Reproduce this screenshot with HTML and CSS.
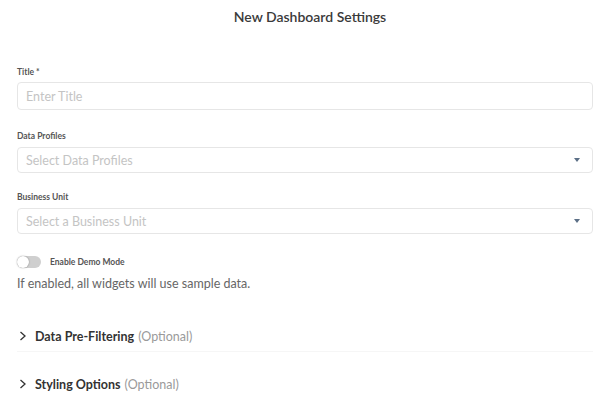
FILE: index.html
```html
<!DOCTYPE html>
<html lang="en">
<head>
  <meta charset="UTF-8" />
  <title>New Dashboard Settings</title>
  <link rel="stylesheet" href="styles.css">
</head>
<body>
  <div class="modal">
    <div class="modal-header">New Dashboard Settings</div>

    <form class="settings-form">
      <div class="field">
        <label for="title">Title *</label>
        <input type="text" id="title" class="text-input" placeholder="Enter Title" />
      </div>

      <div class="field">
        <label>Data Profiles</label>
        <div class="select-box">
          <span class="placeholder">Select Data Profiles</span>
          <span class="caret"></span>
        </div>
      </div>

      <div class="field">
        <label>Business Unit</label>
        <div class="select-box">
          <span class="placeholder">Select a Business Unit</span>
          <span class="caret"></span>
        </div>
      </div>

      <div class="toggle-row">
        <span class="switch"><span class="knob"></span></span>
        <span class="toggle-label">Enable Demo Mode</span>
      </div>
      <p class="help">If enabled, all widgets will use sample data.</p>

      <div class="section first">
        <svg class="chevron" width="8" height="10" viewBox="0 0 8 10"><path d="M1.5 1 L6 5 L1.5 9" fill="none" stroke="#333" stroke-width="1.3"/></svg>
        <span class="section-title">Data Pre-Filtering</span>
        <span class="optional">(Optional)</span>
      </div>
      <div class="section">
        <svg class="chevron" width="8" height="10" viewBox="0 0 8 10"><path d="M1.5 1 L6 5 L1.5 9" fill="none" stroke="#333" stroke-width="1.3"/></svg>
        <span class="section-title">Styling Options</span>
        <span class="optional">(Optional)</span>
      </div>
    </form>
  </div>
</body>
</html>
```

FILE: styles.css
```css
body {
  margin: 0;
  font-family: Lato, 'Noto Sans', sans-serif;
  background: #fff;
  color: #333;
  overflow: hidden;
}

.modal-header {
  height: 34px;
  line-height: 34px;
  text-align: center;
  padding-left: 20px;
  font-size: 14px;
  font-weight: 600;
  color: #3a3a3a;
}

.settings-form {
  padding: 0 7px 0 17px;
  margin-top: 32px;
}

.field {
  margin-bottom: 18px;
}

.field:first-child {
  margin-bottom: 20px;
}

.field label {
  display: block;
  font-size: 8.5px;
  font-weight: 700;
  line-height: 12px;
  color: #555;
  margin-bottom: 4px;
}

.text-input {
  box-sizing: border-box;
  display: block;
  width: 100%;
  height: 28px;
  border: 1px solid #e6e6e6;
  border-radius: 4px;
  padding: 0 8px;
  font-family: inherit;
  font-size: 12.5px;
  outline: none;
}

.text-input::placeholder {
  color: #c4c4c4;
}

.select-box {
  box-sizing: border-box;
  height: 26px;
  border: 1px solid #e6e6e6;
  border-radius: 4px;
  padding: 0 12px 0 8px;
  display: flex;
  align-items: center;
  justify-content: space-between;
  margin-top: 5px;
}

.placeholder {
  font-size: 12.5px;
  color: #c4c4c4;
}

.caret {
  width: 0;
  height: 0;
  border-left: 3.5px solid transparent;
  border-right: 3.5px solid transparent;
  border-top: 4px solid #5b6f86;
}

.toggle-row {
  display: flex;
  align-items: center;
  gap: 9px;
  height: 12px;
  margin-top: 22px;
}

.switch {
  position: relative;
  width: 24px;
  height: 12px;
  border-radius: 6px;
  background: #cfcfcf;
}

.knob {
  position: absolute;
  left: 0;
  top: 0;
  width: 12px;
  height: 12px;
  border-radius: 50%;
  background: #fff;
  box-shadow: 0 0 1.5px rgba(0, 0, 0, 0.45);
}

.toggle-label {
  font-size: 8.5px;
  font-weight: 700;
  color: #555;
}

.help {
  margin: 8px 0 0;
  font-size: 12.5px;
  line-height: 16px;
  color: #666;
}

.section {
  display: flex;
  align-items: center;
  gap: 4px;
  height: 30px;
  font-size: 12.5px;
  border-bottom: 1px solid #f6f6f6;
  margin-top: 17px;
}

.section.first {
  margin-top: 29px;
}

.chevron {
  margin-left: 2px;
  margin-right: 4px;
}

.section-title {
  font-weight: 700;
  color: #333;
}

.optional {
  color: #9a9a9a;
}
```
